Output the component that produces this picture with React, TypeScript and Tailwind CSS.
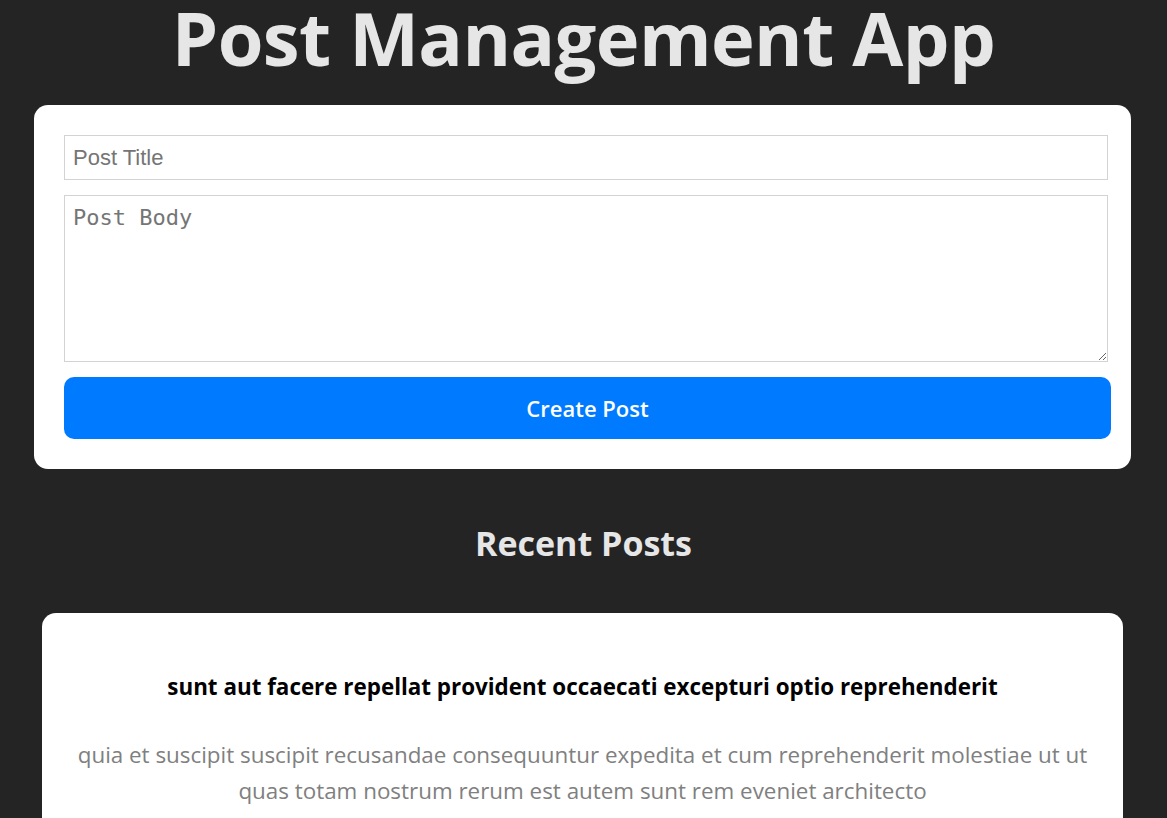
import { useState } from "react";

interface IPost {
  id: number;
  title: string;
  body: string;
}

const posts: IPost[] = [
  {
    id: 1,
    title: "sunt aut facere repellat provident occaecati excepturi optio reprehenderit",
    body: "quia et suscipit suscipit recusandae consequuntur expedita et cum reprehenderit molestiae ut ut quas totam nostrum rerum est autem sunt rem eveniet architecto",
  },
];

export default () => {
  const [title, setTitle] = useState("");
  const [body, setBody] = useState("");

  return (
    <main className="min-h-screen w-full bg-[#242424] text-[#e6e6e6] font-['Open_Sans',sans-serif] overflow-hidden">
      <div className="h-[105px]">
        <h1 className="text-center font-bold text-[74px] leading-[76px] tracking-[-0.6px]">
          Post Management App
        </h1>
      </div>

      <form
        className="ml-[34px] mr-[36px] bg-white rounded-[14px] p-[30px] flex flex-col"
        onSubmit={(e) => e.preventDefault()}
      >
        <input
          value={title}
          onChange={(e) => setTitle(e.target.value)}
          placeholder="Post Title"
          className="w-[1044px] h-[45px] border border-[#d3d3d3] px-[8px] text-[22px] text-black placeholder:text-[#757575] font-['Liberation_Sans',Arial,sans-serif] outline-none"
        />
        <textarea
          value={body}
          onChange={(e) => setBody(e.target.value)}
          placeholder="Post Body"
          className="w-[1044px] h-[167px] mt-[15px] border border-[#d3d3d3] px-[8px] pt-[9px] pb-[8px] text-[22px] leading-[26px] text-black placeholder:text-[#757575] font-['DejaVu_Sans_Mono',monospace] outline-none resize-y"
        />
        <button
          type="submit"
          className="mt-[15px] w-[1047px] h-[62px] rounded-[10px] bg-[#007bff] text-white text-[22px] font-semibold"
        >
          Create Post
        </button>
      </form>

      <h2 className="text-center font-bold text-[34px] leading-[48px] mt-[50px]">Recent Posts</h2>

      <section className="mt-[46px] flex flex-col gap-6">
        {posts.map((post) => (
          <article
            key={post.id}
            className="ml-[42px] mr-[44px] bg-white rounded-[14px] px-[30px] pt-[58px] pb-[40px] text-center"
          >
            <h3 className="text-black font-bold text-[22.4px] leading-[32px]">{post.title}</h3>
            <p className="mt-[34px] text-[#808080] text-[22.4px] leading-[36px]">{post.body}</p>
          </article>
        ))}
      </section>
    </main>
  );
};
